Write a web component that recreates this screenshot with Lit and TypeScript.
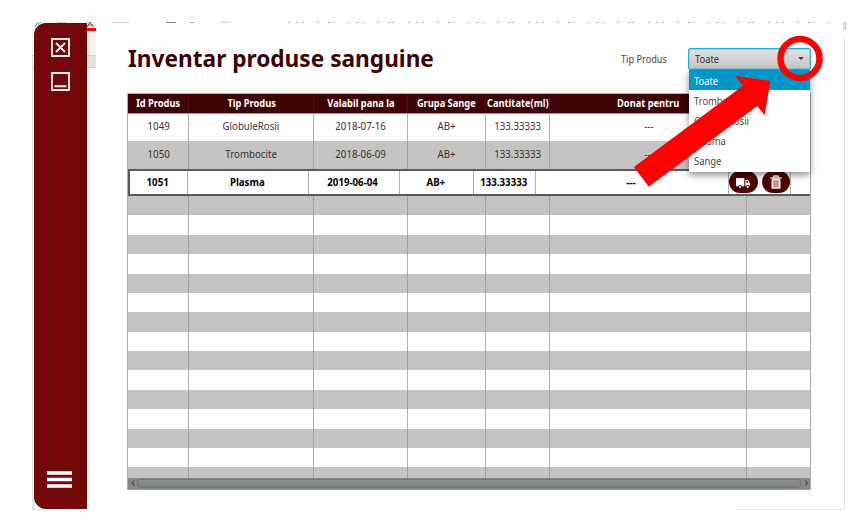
import { LitElement, html, css } from "lit";
import { customElement } from "lit/decorators.js";

const HEADERS = ["Id Produs", "Tip Produs", "Valabil pana la", "Grupa Sange", "Cantitate(ml)", "Donat pentru", ""];
const ROWS = [
  ["1049", "GlobuleRosii", "2018-07-16", "AB+", "133.33333", "---", ""],
  ["1050", "Trombocite", "2018-06-09", "AB+", "133.33333", "---", ""],
];
const SELECTED = ["1051", "Plasma", "2019-06-04", "AB+", "133.33333", "---"];
const OPTIONS = ["Toate", "Trombocite", "GlobuleRosii", "Plasma", "Sange"];

@customElement("product-filter")
export class ProductFilter extends LitElement {
  static styles = css`
    :host { display: flex; align-items: center; position: relative; font-size: 10.2px; color: #444; }
    .label { width: 67px; white-space: nowrap; }
    .t { display: inline-block; transform: scaleX(0.92); transform-origin: 0 50%; }
    .label .t { transform: scaleX(0.9); }
    .combo {
      box-sizing: border-box; width: 123px; height: 22px; padding: 0 6px;
      display: flex; align-items: center; justify-content: space-between;
      border: 1px solid #24aedb; border-radius: 2px; color: #333;
      background: linear-gradient(#e0e0e0, #c6c6c6);
      box-shadow: inset 0 0 0 0.5px #62c4e4;
    }
    .caret { border: 3px solid transparent; border-top: 3.5px solid #444; border-bottom: 0; }
    .menu {
      position: absolute; z-index: 2; right: 1px; top: 22px; width: 121px; height: 102px;
      background: #fff; box-shadow: 0 3px 7px rgba(0, 0, 0, 0.45);
    }
    .option { height: 20.2px; line-height: 22px; padding-left: 4.5px; }
    .option.active { background: #0096c9; color: #fff; }
  `;
  render() {
    return html`
      <div class="label"><span class="t">Tip Produs</span></div>
      <div class="combo"><span class="t">Toate</span><i class="caret"></i></div>
      <div class="menu">
        ${OPTIONS.map((o, i) => html`<div class="option ${i === 0 ? "active" : ""}"><span class="t">${o}</span></div>`)}
      </div>
    `;
  }
}

@customElement("stock-table")
export class StockTable extends LitElement {
  static styles = css`
    :host {
      display: flex; flex-direction: column; box-sizing: border-box; position: relative;
      width: 684px; height: 396.5px; border: 1px solid #aaa; border-top-color: #b8b0b0; border-bottom: 0;
      font-size: 10.2px; color: #333; background: #fff;
    }
    .row { display: grid; grid-template-columns: 61px 124.5px 94px 78px 64.5px 197px 1fr; flex: none; }
    .cell {
      box-sizing: border-box; border-right: 1px solid #b0b0ae;
      display: flex; align-items: center; justify-content: center; white-space: nowrap;
    }
    .cell:last-child { border-right: 0; }
    .t { display: inline-block; transform: scaleX(0.95); }
    .head { height: 19.5px; background: #3d0203; color: #fff; font-weight: 700; border-bottom: 1px solid #a88; box-sizing: border-box; }
    .head .cell { border-color: #4a1112; padding-left: 1px; }
    .head .t { transform: scaleX(0.91); }
    .data { height: 27.5px; }
    .data .cell { padding: 0 0 2px 1px; }
    .grey { background: #c6c4c2; }
    .grey .cell { border-color: #a09f9d; }
    .selected {
      box-sizing: border-box; height: 27.5px; flex: none; display: grid;
      grid-template-columns: 58px 121px 91px 74px 62px 193px 62px 1fr;
      border: 2px solid #5a5a5a; border-width: 2px 0 2px 2px;
      color: #000; font-weight: 700; background: #fff;
    }
    .selected .cell { padding: 0 2px 1px 0; }
    .selected .actions { gap: 4px; padding-right: 0; }
    .action {
      width: 28.5px; height: 22.5px; border-radius: 11px; background: #4d0002;
      display: flex; align-items: center; justify-content: center;
    }
    .filler { flex: 1; overflow: hidden; min-height: 0; }
    .filler .row { height: 19.38px; }
    .scroll {
      height: 12px; flex: none; display: flex; align-items: center; background: #868985;
      border-bottom: 1px solid #999b98; box-sizing: border-box;
    }
    .thumb {
      flex: 1; height: 9px; box-sizing: border-box; border: 1px solid #737672; border-radius: 3px;
      background: linear-gradient(#8d918d, #7c807c);
    }
    .arrow { display: block; margin: 0 1px 0 2px; }
  `;

  private cells(values: string[]) {
    return values.map((v) => html`<div class="cell"><span class="t">${v}</span></div>`);
  }

  render() {
    return html`
      <div class="row head">${this.cells(HEADERS)}</div>
      ${ROWS.map((r, i) => html`<div class="row data ${i % 2 ? "grey" : ""}">${this.cells(r)}</div>`)}
      <div class="selected">
        ${this.cells(SELECTED)}
        <div class="cell actions">
          <span class="action">
            <svg width="16" height="14" viewBox="0 0 16 14">
              <path d="M1 3h8.300v8.200H7a1.900 1.900 0 0 0-3.600 0H1z" fill="#fff" />
              <path d="M10.400 5h2.600l1.700 2.400v3.800h-.4a1.700 1.700 0 0 0-3.200 0h-.7z" fill="#fff" />
              <path d="M11.400 6h1.300l1 1.700h-2.300z" fill="#4d0002" />
              <circle cx="5.200" cy="12" r="1.100" fill="#fff" /><circle cx="12.700" cy="12" r="1.100" fill="#fff" />
            </svg>
          </span>
          <span class="action">
            <svg width="14" height="16" viewBox="0 0 14 16">
              <path d="M1.500 4h11M4.800 3.500V2h4.400v1.500" fill="none" stroke="#fff" stroke-width="1.300" />
              <path d="M3 5.500h8v8.700H3z" fill="#e9cfcf" stroke="#fff" stroke-width="1" />
              <path d="M5.200 6.500v7M7 6.500v7M8.800 6.500v7" stroke="#8a5052" stroke-width=".8" />
            </svg>
          </span>
        </div>
        <div></div>
      </div>
      <div class="filler">
        ${Array.from({ length: 15 }, (_, i) => html`<div class="row ${i % 2 ? "" : "grey"}">${this.cells(HEADERS.map(() => ""))}</div>`)}
      </div>
      <div class="scroll">
        <svg class="arrow" width="6" height="8" viewBox="0 0 6 8"><path d="M4.500 1.500L2 4l2.500 2.500" fill="none" stroke="#555" stroke-width="1.200" /></svg>
        <div class="thumb"></div>
        <svg class="arrow" width="6" height="8" viewBox="0 0 6 8"><path d="M2 1.500L4.500 4 2 6.500" fill="none" stroke="#555" stroke-width="1.200" /></svg>
      </div>
    `;
  }
}

@customElement("app-root")
export class AppRoot extends LitElement {
  static styles = css`
    :host {
      display: block; position: relative; width: 858px; height: 526px; overflow: hidden;
      background: #fff; font-family: "Noto Sans", "Open Sans", sans-serif;
    }
    .backdrop, .marks { position: absolute; left: 0; top: 0; }
    .marks { z-index: 3; }
    .window { position: relative; display: flex; height: 526px; box-sizing: border-box; padding: 23px 0 17px 34px; }
    .side {
      box-sizing: border-box; width: 53px; height: 486px; background: #720808; border-radius: 12px 0 0 12px;
      display: flex; flex-direction: column; align-items: center; padding: 15px 0 21px;
    }
    .side svg { display: block; }
    .min { margin-top: 14.5px; }
    .menu { margin-top: auto; margin-right: 2px; }
    .main { margin-left: 40px; width: 684px; }
    .top { display: flex; justify-content: space-between; height: 70px; }
    .title {
      margin: 18px 0 0 0.5px; font-size: 24px; line-height: 34px; font-weight: 700; color: #3d0203;
      white-space: nowrap; transform: scaleX(0.944); transform-origin: 0 50%;
    }
    product-filter { height: 22px; margin-top: 24.5px; }
  `;
  render() {
    return html`
      <svg class="backdrop" width="858" height="526" viewBox="0 0 858 526">
        <path d="M32 22h64v46H32z" fill="#f3f3f3" />
        <path d="M32 55h64v12.500H32z" fill="#e4e4e4" />
        <path d="M32 55.500h64M32 67.500h64" stroke="#cfcfcf" />
        <path d="M32 68h3v441h12v1H32z" fill="#e3e3e3" />
        <path d="M35 27l3-5M38 25l3-3" stroke="#6d9bc8" />
        <path d="M87 27l3-5 3.500 5M88.500 25h4" stroke="#555" fill="none" />
        <path d="M87 29.500h9" stroke="#f00" stroke-width="3" />
        <path d="M57 22.500h10M112 22.500h17M221 22.500h9" stroke="#ccc" />
        <path d="M166 22.500h10" stroke="#888" />
        <path d="M190 22.500h4" stroke="#8fb4d8" />
        <path d="M288 22.500H835" stroke="#bbb" stroke-dasharray="2 6 3 3 2 13 2 9 3 1 2 14" />
        <path d="M844.500 35v475M737 509.500h108" stroke="#e6e6e6" fill="none" />
        <path d="M843 23h3v2h-3M843 27h3v2h-3" stroke="#999" fill="none" stroke-width=".7" />
      </svg>
      <div class="window">
        <div class="side">
          <svg width="19" height="19" viewBox="0 0 19 19"><path d="M1 1h17v17H1zM5 5l9 9M14 5l-9 9" fill="none" stroke="#f6ecec" stroke-width="1.900" /></svg>
          <svg class="min" width="19" height="19" viewBox="0 0 19 19"><path d="M1 1h17v17H1zM3.500 14.300h12" fill="none" stroke="#f6ecec" stroke-width="1.900" /></svg>
          <svg class="menu" width="25" height="17" viewBox="0 0 25 17"><path d="M0 2h25M0 8.500h25M0 15h25" stroke="#fff" stroke-width="3.300" /></svg>
        </div>
        <div class="main">
          <div class="top">
            <h1 class="title">Inventar produse sanguine</h1>
            <product-filter></product-filter>
          </div>
          <stock-table></stock-table>
        </div>
      </div>
      <svg class="marks" width="858" height="526" viewBox="0 0 858 526">
        <path d="M770.300 81L735.300 75.700L743 85.700L634 167L648.700 186.700L757.300 106L764.700 115.300z" fill="#f00" />
        <circle cx="800" cy="58.500" r="19.500" fill="none" stroke="#f00" stroke-width="6.500" />
      </svg>
    `;
  }
}
